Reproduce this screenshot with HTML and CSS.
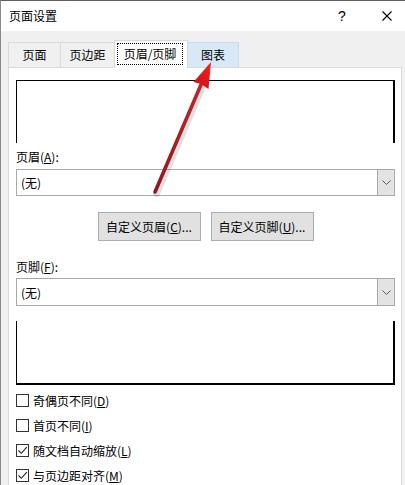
FILE: index.html
```html
<!DOCTYPE html>
<html lang="zh-CN">
<head>
<meta charset="utf-8">
<title>页面设置</title>
<link rel="stylesheet" href="styles.css">
</head>
<body>
<div class="window">
  <div class="titlebar">
    <span class="title">页面设置</span>
    <span class="help">?</span>
    <span class="close"><svg width="10" height="10" viewBox="0 0 10 10"><path d="M0.5 0.5 L9.5 9.5 M9.5 0.5 L0.5 9.5" stroke="#000" stroke-width="1.1" fill="none"/></svg></span>
  </div>
  <div class="tabs">
    <div class="tab t1">页面</div>
    <div class="tab t2">页边距</div>
    <div class="tab t3 active"><span class="focus">页眉/页脚</span></div>
    <div class="tab t4 hover">图表</div>
  </div>
  <div class="panel">
    <div class="preview head"></div>
    <div class="label">页眉(<u>A</u>):</div>
    <div class="select">
      <span class="value">(无)</span>
      <span class="drop"><svg width="9" height="5" viewBox="0 0 9 5"><path d="M0.5 0.5 L4.5 4.5 L8.5 0.5" stroke="#5a5a5a" stroke-width="1" fill="none"/></svg></span>
    </div>
    <div class="buttons">
      <span class="btn">自定义页眉(<u>C</u>)...</span>
      <span class="btn">自定义页脚(<u>U</u>)...</span>
    </div>
    <div class="label label2">页脚(<u>F</u>):</div>
    <div class="select select2">
      <span class="value">(无)</span>
      <span class="drop"><svg width="9" height="5" viewBox="0 0 9 5"><path d="M0.5 0.5 L4.5 4.5 L8.5 0.5" stroke="#5a5a5a" stroke-width="1" fill="none"/></svg></span>
    </div>
    <div class="preview foot"></div>
    <div class="checks">
      <div class="check"><span class="box"></span><span>奇偶页不同(<u>D</u>)</span></div>
      <div class="check"><span class="box"></span><span>首页不同(<u>I</u>)</span></div>
      <div class="check"><span class="box checked"><svg width="11" height="11" viewBox="0 0 11 11"><path d="M1.5 5.5 L4.3 8.3 L9.8 2.2" stroke="#222" stroke-width="1.1" fill="none"/></svg></span><span>随文档自动缩放(<u>L</u>)</span></div>
      <div class="check"><span class="box checked"><svg width="11" height="11" viewBox="0 0 11 11"><path d="M1.5 5.5 L4.3 8.3 L9.8 2.2" stroke="#222" stroke-width="1.1" fill="none"/></svg></span><span>与页边距对齐(<u>M</u>)</span></div>
    </div>
  </div>
</div>
<svg class="arrow" width="405" height="485" viewBox="0 0 405 485">
  <defs>
    <linearGradient id="shaft" x1="155" y1="193" x2="205" y2="80" gradientUnits="userSpaceOnUse">
      <stop offset="0" stop-color="#8e1a1d"/>
      <stop offset="1" stop-color="#c3262a"/>
    </linearGradient>
    <linearGradient id="headg" x1="194" y1="84" x2="212" y2="70" gradientUnits="userSpaceOnUse">
      <stop offset="0" stop-color="#c81515"/>
      <stop offset="1" stop-color="#f01e1e"/>
    </linearGradient>
  </defs>
  <line x1="156.5" y1="193.5" x2="204.5" y2="82" stroke="#000" stroke-opacity="0.12" stroke-width="7" stroke-linecap="round"/>
  <line x1="155" y1="192" x2="203" y2="80" stroke="url(#shaft)" stroke-width="3.6" stroke-linecap="round"/>
  <polygon points="211,62 208.5,89 201,84 193.5,82" fill="url(#headg)"/>
</svg>
</body>
</html>
```

FILE: styles.css
```css
* {
  box-sizing: border-box;
}

html, body {
  margin: 0;
  padding: 0;
}

body {
  width: 405px;
  height: 485px;
  overflow: hidden;
  background: #f0f0f0;
  font-family: "Noto Sans CJK SC", "Microsoft YaHei", sans-serif;
  font-size: 12px;
  color: #000;
  position: relative;
}

.window {
  height: 485px;
  border-top: 1px solid #5e5e5e;
  border-left: 1px solid #8a8a8a;
  background: #f0f0f0;
}

u {
  text-decoration: underline;
  text-underline-offset: 1px;
}

/* title bar */
.titlebar {
  height: 30px;
  background: #fff;
  display: flex;
  align-items: center;
  padding-right: 13px;
}

.title {
  padding-left: 8px;
  font-size: 12px;
  line-height: 16px;
}

.help {
  margin-left: auto;
  width: 16px;
  text-align: center;
  font-family: "Liberation Sans", sans-serif;
  font-size: 14px;
  line-height: 16px;
}

.close {
  margin-left: 32px;
  width: 10px;
  height: 10px;
  display: flex;
}

/* tabs */
.tabs {
  margin-top: 9px;
  height: 27px;
  padding-left: 7px;
  display: flex;
  align-items: flex-end;
}

.tab {
  height: 25px;
  border: 1px solid #d9d9d9;
  border-bottom: none;
  background: #f0f0f0;
  display: flex;
  align-items: center;
  justify-content: center;
  line-height: 16px;
  margin-left: -1px;
}

.t1 { width: 53px; margin-left: 0; }
.t2 { width: 55px; }
.t3 { width: 74px; }
.t4 { width: 52px; }

.tab.active {
  height: 28px;
  margin-bottom: -1px;
  background: #fff;
  position: relative;
  z-index: 2;
  padding: 2px 4px 3px 2px;
  align-items: stretch;
}

.focus {
  flex: 1;
  border: 1px dotted #000;
  display: flex;
  align-items: center;
  justify-content: center;
}

.tab.hover {
  background: #d9e8f7;
  border-color: #c6dcf1;
}

/* panel */
.panel {
  margin-left: 7px;
  width: 394px;
  height: 420px;
  background: #fff;
  border: 1px solid #d9d9d9;
  padding: 12px 6px 0 7px;
}

.preview {
  border-left: 1px solid #000;
  border-right: 2px solid #000;
}

.preview.head {
  height: 63px;
  border-top: 1px solid #000;
}

.preview.foot {
  margin-top: 15px;
  height: 64px;
  border-bottom: 2px solid #000;
}

.label {
  margin-top: 5px;
  height: 18px;
  line-height: 18px;
}

.label2 {
  margin-top: 17px;
}

.select {
  margin-top: 3px;
  height: 27px;
  border: 1px solid #a9a9a9;
  display: flex;
  align-items: stretch;
}

.select2 {
  margin-top: 2px;
  height: 28px;
}

.value {
  flex: 1;
  padding-left: 4px;
  display: flex;
  align-items: center;
}

.drop {
  width: 17px;
  background: #e3e3e3;
  border-left: 1px solid #a9a9a9;
  display: flex;
  align-items: center;
  justify-content: center;
}

.buttons {
  margin-top: 16px;
  display: flex;
  justify-content: center;
  gap: 10px;
}

.btn {
  width: 103px;
  height: 29px;
  background: #e1e1e1;
  border: 1px solid #adadad;
  display: flex;
  align-items: center;
  justify-content: center;
}

.checks {
  margin-top: 3px;
  display: flex;
  flex-direction: column;
}

.check {
  height: 25px;
  display: flex;
  align-items: center;
}

.box {
  width: 13px;
  height: 13px;
  border: 1px solid #333;
  background: #fff;
  margin-right: 4px;
  display: flex;
  align-items: center;
  justify-content: center;
}

/* annotation arrow overlay */
.arrow {
  position: absolute;
  left: 0;
  top: 0;
  pointer-events: none;
  z-index: 10;
}
```
